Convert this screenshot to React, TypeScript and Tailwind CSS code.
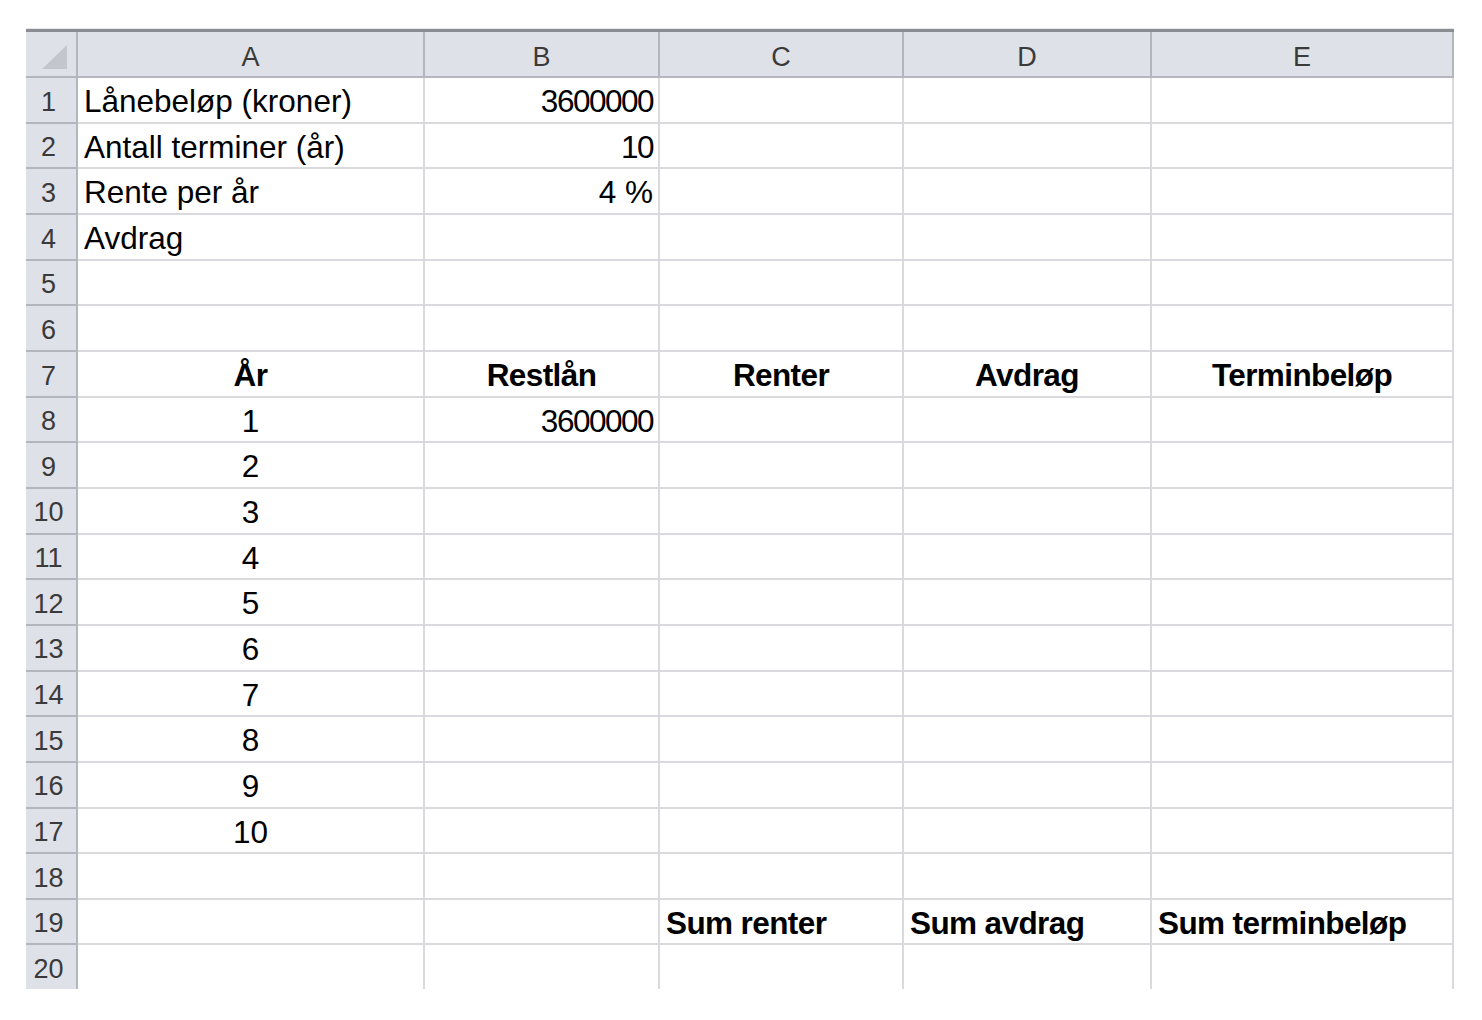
const cols = [
  { key: 'A', w: 'w-[347px]' },
  { key: 'B', w: 'w-[235px]' },
  { key: 'C', w: 'w-[244px]' },
  { key: 'D', w: 'w-[248px]' },
  { key: 'E', w: 'w-[302px]' },
];

type Cell = { text: string; align?: 'left' | 'right' | 'center'; bold?: boolean; num?: boolean };

// sheet contents keyed by row number, one entry per column A–E
const rows: Record<number, (Cell | null)[]> = {
  1: [{ text: 'Lånebeløp (kroner)' }, { text: '3600000', align: 'right', num: true }],
  2: [{ text: 'Antall terminer (år)' }, { text: '10', align: 'right', num: true }],
  3: [{ text: 'Rente per år' }, { text: '4 %', align: 'right' }],
  4: [{ text: 'Avdrag' }],
  7: [
    { text: 'År', align: 'center', bold: true },
    { text: 'Restlån', align: 'center', bold: true },
    { text: 'Renter', align: 'center', bold: true },
    { text: 'Avdrag', align: 'center', bold: true },
    { text: 'Terminbeløp', align: 'center', bold: true },
  ],
  8: [{ text: '1', align: 'center' }, { text: '3600000', align: 'right', num: true }],
  19: [null, null, { text: 'Sum renter', bold: true }, { text: 'Sum avdrag', bold: true }, { text: 'Sum terminbeløp', bold: true }],
};
for (let y = 2; y <= 10; y++) rows[7 + y] = [{ text: String(y), align: 'center' }];

const alignCls = { left: 'justify-start pl-[6px]', right: 'justify-end pr-[5px]', center: 'justify-center' };

function SheetRow({ n }: { n: number }) {
  const data = rows[n] || [];
  const last = n === 20;
  return (
    <div className={`flex ${last ? 'h-[44px]' : 'h-[45.67px]'}`}>
      <div
        className={`w-[52px] shrink-0 flex items-center justify-center pt-[4px] pr-[5px] bg-[#dfe1e8] border-r-2 border-[#b4b6bd] text-[#3a3a3a] text-[27px] ${last ? '' : 'border-b-2'}`}
      >
        {n}
      </div>
      {cols.map((c, i) => {
        const cell = data[i];
        return (
          <div
            key={c.key}
            className={`${c.w} shrink-0 flex items-end pb-[4px] border-r-2 border-[#dadade] ${last ? '' : 'border-b-2'} ${
              cell ? alignCls[cell.align || 'left'] : ''
            }`}
          >
            {cell && (
              <span
                className={`text-[31.5px] leading-none text-black whitespace-nowrap ${cell.bold ? 'font-bold tracking-[-0.6px]' : ''} ${
                  cell.num ? 'tracking-[-1.5px]' : ''
                }`}
              >
                {cell.text}
              </span>
            )}
          </div>
        );
      })}
    </div>
  );
}

export default function App() {
  return (
    <div className="w-[1482px] h-[1020px] bg-white pt-[28px] pl-[26px] font-['Liberation_Sans',Arial,sans-serif]">
      <div className="w-[1428px]">
        <div className="h-[1px] bg-[#e6e6f0]" />
        <div className="flex h-[49px] border-t-[3px] border-[#8b8b92] bg-[#dfe1e8]">
          <div className="w-[52px] shrink-0 border-r-2 border-b-2 border-[#b4b6bd] relative">
            <svg className="absolute left-[16px] top-[13px]" width="25" height="24" viewBox="0 0 25 24">
              <polygon points="25,0 25,24 0,24" fill="#c4c6cd" />
            </svg>
          </div>
          {cols.map((c) => (
            <div
              key={c.key}
              className={`${c.w} shrink-0 flex items-center justify-center pt-[6px] border-r-2 border-b-2 border-[#b4b6bd] text-[27px] text-[#3a3a3a]`}
            >
              {c.key}
            </div>
          ))}
        </div>
        {Array.from({ length: 20 }, (_, i) => (
          <SheetRow key={i} n={i + 1} />
        ))}
      </div>
    </div>
  );
}
